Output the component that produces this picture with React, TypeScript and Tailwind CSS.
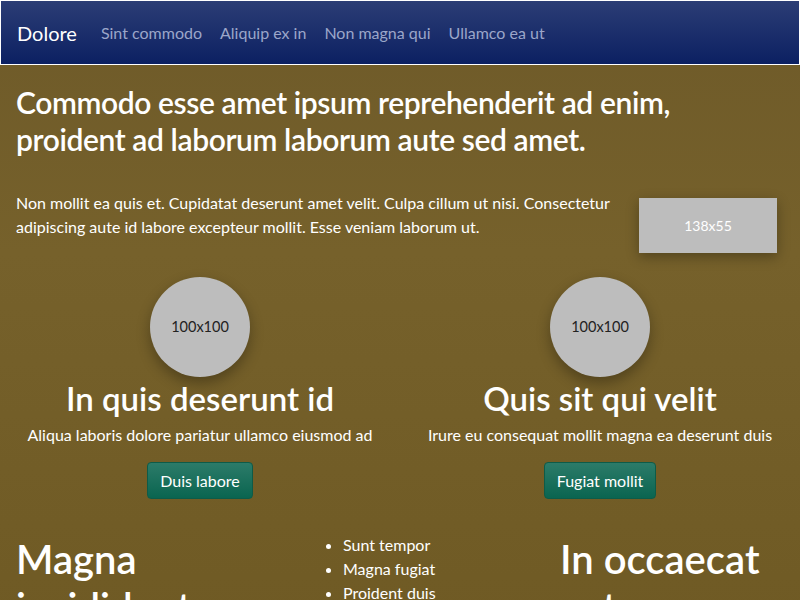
export default function App() {
  const links = ['Sint commodo', 'Aliquip ex in', 'Non magna qui', 'Ullamco ea ut'];

  const features = [
    { title: 'In quis deserunt id', text: 'Aliqua laboris dolore pariatur ullamco eiusmod ad', cta: 'Duis labore' },
    { title: 'Quis sit qui velit', text: 'Irure eu consequat mollit magna ea deserunt duis', cta: 'Fugiat mollit' },
  ];

  return (
    <div className="min-h-[600px] overflow-hidden bg-[linear-gradient(180deg,#6e5a29_0%,#76612b_40%,#6f5a24_100%)] font-['Lato','Liberation_Sans',sans-serif] text-white">
      <nav className="flex h-[65px] items-center border border-white bg-[linear-gradient(180deg,#2b3d75_0%,#0c2062_100%)] px-4">
        <a className="mr-6 text-[20px] text-white">Dolore</a>
        <div className="flex gap-[18px]">
          {links.map((l) => (
            <a key={l} className="text-[16px] text-[#9ba6c9]">{l}</a>
          ))}
        </div>
      </nav>

      <main>
        <div className="px-4">
          <h1 className="mt-[19px] text-[30px] font-semibold leading-[37px] tracking-[-0.4px]">
            Commodo esse amet ipsum reprehenderit ad enim, proident ad laborum laborum aute sed amet.
          </h1>

          <div className="mt-[33px] flex items-start justify-between">
            <p className="w-[612px] text-[16px] leading-[24px]">
              Non mollit ea quis et. Cupidatat deserunt amet velit. Culpa cillum ut nisi. Consectetur adipiscing aute id labore excepteur mollit. Esse veniam laborum ut.
            </p>
            <div className="mr-[7px] mt-[7px] flex h-[55px] w-[138px] items-center justify-center bg-[#bdbdbd] text-[14px] text-white shadow-[0_4px_12px_rgba(0,0,0,0.3)]">
              138x55
            </div>
          </div>
        </div>

        <div className="mt-[24px] grid grid-cols-2">
          {features.map((f) => (
            <div key={f.title} className="flex flex-col items-center text-center">
              <div className="flex h-[100px] w-[100px] items-center justify-center rounded-full bg-[#bdbdbd] text-[14.5px] text-[#222] shadow-[0_6px_14px_rgba(0,0,0,0.3)]">
                100x100
              </div>
              <h2 className="mt-[1px] text-[33px] font-semibold leading-[40px]">{f.title}</h2>
              <p className="mt-[5px] text-[16px] leading-[24px]">{f.text}</p>
              <button className="mt-[15px] flex h-[37px] items-center rounded-[4px] border border-[#0e5b48] bg-[linear-gradient(180deg,#2c7b69_0%,#0a6550_100%)] px-3 text-[16px] text-white">
                {f.cta}
              </button>
            </div>
          ))}
        </div>

        <div className="mt-[36px] grid grid-cols-[290px_254px_1fr] px-4">
          <h1 className="text-[40px] font-semibold leading-[1.2]">Magna incididunt</h1>
          <ul className="-mt-[2px] list-disc pl-[37px] text-[16px] leading-[24px]">
            <li>Sunt tempor</li>
            <li>Magna fugiat</li>
            <li>Proident duis</li>
          </ul>
          <h1 className="text-[40px] font-semibold leading-[1.2]">In occaecat aute</h1>
        </div>
      </main>
    </div>
  );
}
